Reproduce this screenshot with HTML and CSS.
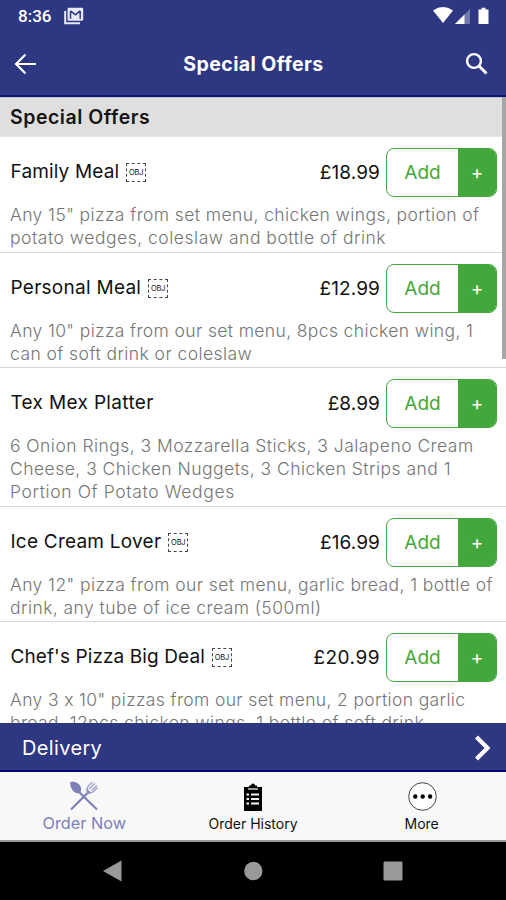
FILE: index.html
```html
<!DOCTYPE html>
<html lang="en">
<head>
<meta charset="utf-8">
<title>Special Offers</title>
<link rel="stylesheet" href="styles.css">
</head>
<body>
<div class="app">
  <header class="top">
    <div class="status">
      <span class="clock">8:36</span>
      <svg class="mail" width="20" height="18" viewBox="0 0 20 18"><path d="M1.2 4v12.3H16" fill="none" stroke="#e8eafa" stroke-width="2"/><rect x="3.6" y=".8" width="15.6" height="13" rx="1.2" fill="#e8eafa"/><path d="M6.500 4v7.800M16.200 4v7.800M6.500 3.800l4.900 4 4.800-4" fill="none" stroke="#2e3781" stroke-width="1.500"/></svg>
      <svg class="signals" width="60" height="18" viewBox="0 0 60 18"><path d="M0 3.400Q10-3.400 20 3.400L10 16Z" fill="#fff"/><path d="M37 2v15H22Z" fill="#7077aa"/><path d="M31.500 7.500V17H22Z" fill="#fff"/><path d="M48.500.8h4v1.700h3V17h-10V2.500h3Z" fill="#fff"/></svg>
    </div>
    <div class="bar">
      <svg class="back" width="24" height="22" viewBox="0 0 24 22"><path d="M22 11H2M11.500 1.500 2 11l9.500 9.500" fill="none" stroke="#fff" stroke-width="2.200"/></svg>
      <h1>Special Offers</h1>
      <svg class="search" width="24" height="24" viewBox="0 0 24 24"><circle cx="9" cy="9" r="6.900" fill="none" stroke="#fff" stroke-width="2.400"/><path d="m14 14 7.500 7.500" stroke="#fff" stroke-width="3"/></svg>
    </div>
  </header>

  <main class="list">
    <h2>Special Offers</h2>
    <article class="item">
      <div class="head"><span class="name n1">Family Meal</span><span class="obj">OBJ</span><span class="price">£18.99</span><span class="buy"><b>Add</b><i>+</i></span></div>
      <p><span class="d1">Any 15" pizza from set menu, chicken wings, portion of</span><span class="d2">potato wedges, coleslaw and bottle of drink</span></p>
    </article>
    <article class="item">
      <div class="head"><span class="name n2">Personal Meal</span><span class="obj">OBJ</span><span class="price">£12.99</span><span class="buy"><b>Add</b><i>+</i></span></div>
      <p><span class="d3">Any 10" pizza from our set menu, 8pcs chicken wing, 1</span><span class="d4">can of soft drink or coleslaw</span></p>
    </article>
    <article class="item">
      <div class="head"><span class="name n3">Tex Mex Platter</span><span class="price">£8.99</span><span class="buy"><b>Add</b><i>+</i></span></div>
      <p><span class="d5">6 Onion Rings, 3 Mozzarella Sticks, 3 Jalapeno Cream</span><span class="d6">Cheese, 3 Chicken Nuggets, 3 Chicken Strips and 1</span><span class="d7">Portion Of Potato Wedges</span></p>
    </article>
    <article class="item">
      <div class="head"><span class="name n4">Ice Cream Lover</span><span class="obj">OBJ</span><span class="price">£16.99</span><span class="buy"><b>Add</b><i>+</i></span></div>
      <p><span class="d8">Any 12" pizza from our set menu, garlic bread, 1 bottle of</span><span class="d9">drink, any tube of ice cream (500ml)</span></p>
    </article>
    <article class="item">
      <div class="head"><span class="name n5">Chef's Pizza Big Deal</span><span class="obj">OBJ</span><span class="price wide">£20.99</span><span class="buy"><b>Add</b><i>+</i></span></div>
      <p><span class="d10">Any 3 x 10" pizzas from our set menu, 2 portion garlic</span><span class="d11">bread, 12pcs chicken wings, 1 bottle of soft drink</span></p>
    </article>
    <div class="thumb"></div>
  </main>

  <div class="delivery">
    <span>Delivery</span>
    <svg width="18" height="26" viewBox="0 0 18 26"><path d="m2.500 2 11 11-11 11" fill="none" stroke="#fff" stroke-width="4.200"/></svg>
  </div>

  <nav class="tabs">
    <div class="tab active">
      <svg width="30" height="30" viewBox="0 0 30 30"><path d="M9 10 28 28.500M20.500 10 2 28.500" stroke="#7d80b5" stroke-width="2.200" fill="none"/><path d="M1.200 1.200C5-.4 10 2 11.500 5.500c1 2.600.8 5-.5 6.200-1.500 1.200-4.500.6-6.500-1.400S.8 4.500 1.200 1.200Z" fill="#7d80b5"/><path d="M18 10.500c-.8-2.700.2-4.500 2-6.300L23.500 1M20.200 8 26 2.200M22.500 9.500 28 4.500M18.500 11c2.500 1.300 5 .6 6.600-1L28.500 6.500" stroke="#a5a8cf" stroke-width="1.500" fill="none"/><path d="m18 8 4 4-4 1.500Z" fill="#8f92c0"/></svg>
      <span>Order Now</span>
    </div>
    <div class="tab">
      <svg width="30" height="30" viewBox="0 0 30 30"><path d="M6 6h5V4.500h2a2 2 0 0 1 4 0h2V6h5v24H6Z" fill="#000"/><path d="M10 8h10" stroke="#f8f8f8" stroke-width="1.200"/><path d="M8.500 13.500h2.500m2 0h8M8.500 18h2.500m2 0h8M8.500 22.500h2.500m2 0h8" stroke="#f8f8f8" stroke-width="2"/></svg>
      <span>Order History</span>
    </div>
    <div class="tab">
      <svg width="30" height="30" viewBox="0 0 30 30"><circle cx="15.500" cy="15.500" r="13.800" fill="#fff" stroke="#444" stroke-width="1"/><circle cx="8.300" cy="15.500" r="2.200"/><circle cx="15.700" cy="15.500" r="2.200"/><circle cx="23.100" cy="15.500" r="2.200"/></svg>
      <span>More</span>
    </div>
  </nav>

  <footer class="system">
    <svg width="20" height="22" viewBox="0 0 20 22"><path d="M18.500.5v21L0 11Z" fill="#999"/></svg>
    <svg width="20" height="20" viewBox="0 0 20 20"><circle cx="10.300" cy="10" r="9.200" fill="#999"/></svg>
    <svg width="20" height="20" viewBox="0 0 20 20"><rect x=".5" y=".5" width="19" height="19" rx="1.200" fill="#999"/></svg>
  </footer>
</div>
</body>
</html>
```
FILE: styles.css
```css
* { box-sizing: border-box; }
body { margin: 0; font-family: Inter, sans-serif; font-feature-settings: "calt" 0; background: #fff; }
.app { width: 506px; height: 900px; display: flex; flex-direction: column; overflow: hidden; }
svg { display: block; flex: none; }

.top { height: 97px; flex: none; background: #2e3781; border-bottom: 2px solid #0d1874; color: #fff; }
.status { height: 32px; display: flex; align-items: center; padding: 0 13px 0 18px; }
.clock { font: 500 17px/32px Roboto, sans-serif; letter-spacing: 0; width: 46px; }
.signals { margin-left: auto; }
.bar { height: 63px; display: grid; grid-template-columns: 40px 1fr 40px; align-items: center; padding: 0 16px 0 14px; }
.search { justify-self: end; margin-right: 1px; }
h1 { margin: 0; padding-left: 3px; font-size: 19.500px; font-weight: 700; text-align: center; letter-spacing: .42px; }

.list { position: relative; flex: none; height: 626px; overflow: hidden; }
h2 { margin: 0; height: 40px; padding-left: 10px; background: #dfdfdf; font-size: 19.500px; line-height: 39px; font-weight: 600; letter-spacing: .52px; color: #151515; border-top: 1px solid #c4c4c4; border-bottom: 1px solid #e8e8e8; }
.item { padding: 11px 9px 2.500px 10px; border-bottom: 1px solid #d8d8d8; }
.head { display: flex; height: 49px; font-size: 19px; line-height: 48px; color: #111; }
.name { padding-left: .5px; }
.n1 { letter-spacing: .15px; }
.n2 { letter-spacing: .27px; }
.n3 { letter-spacing: .34px; }
.n4 { letter-spacing: .23px; }
.n5 { letter-spacing: .1px; }
.obj { width: 20px; height: 19px; margin: 15px 0 0 7px; border: 1px dashed #444; font-size: 7.500px; line-height: 17px; text-align: center; letter-spacing: -.2px; }
.price { margin-left: auto; line-height: 49px; letter-spacing: .1px; }
.wide { letter-spacing: .5px; }
.buy { display: flex; width: 111px; margin-left: 6px; border: 1px solid #43a83c; border-radius: 8px; overflow: hidden; text-align: center; }
.buy b { flex: 1; font-weight: 400; color: #43a83c; }
.buy i { width: 38px; background: #43a83c; color: #fff; font-style: normal; font-weight: 400; }
.buy b, .buy i { line-height: 48px; }
p { margin: 6px 0 0; font-size: 17.500px; line-height: 23px; font-weight: 300; color: #757575; }
p span { display: block; white-space: nowrap; width: max-content; }
.d1 { letter-spacing: .41px; }
.d2 { letter-spacing: .51px; }
.d3 { letter-spacing: .37px; }
.d4 { letter-spacing: .43px; }
.d5 { letter-spacing: .46px; }
.d6 { letter-spacing: .47px; }
.d7 { letter-spacing: .62px; }
.d8 { letter-spacing: .41px; }
.d9 { letter-spacing: .44px; }
.d10 { letter-spacing: .36px; }
.d11 { letter-spacing: .4px; }
.thumb { position: absolute; right: 0; top: 0; width: 4px; height: 262px; background: #a6a6a6; }

.delivery { height: 49px; flex: none; display: flex; align-items: center; justify-content: space-between; padding: 2px 14px 0 22px; background: #2e3781; border-bottom: 2px solid #07086f; color: #fff; font-size: 20px; letter-spacing: .35px; }
.tabs { height: 70px; flex: none; display: grid; grid-template-columns: repeat(3, 1fr); background: #f8f8f8; border-bottom: 2px solid #999; }
.tab { display: flex; flex-direction: column; align-items: center; padding-top: 9px; font-size: 14px; line-height: 20px; color: #111; }
.tab span { margin-top: 3px; }
.active { color: #7d80b5; font-size: 16.300px; }
.active span { margin-top: 2px; }
.system { flex: 1; background: #000; display: flex; align-items: center; justify-content: space-between; padding: 0 103px; }
```
